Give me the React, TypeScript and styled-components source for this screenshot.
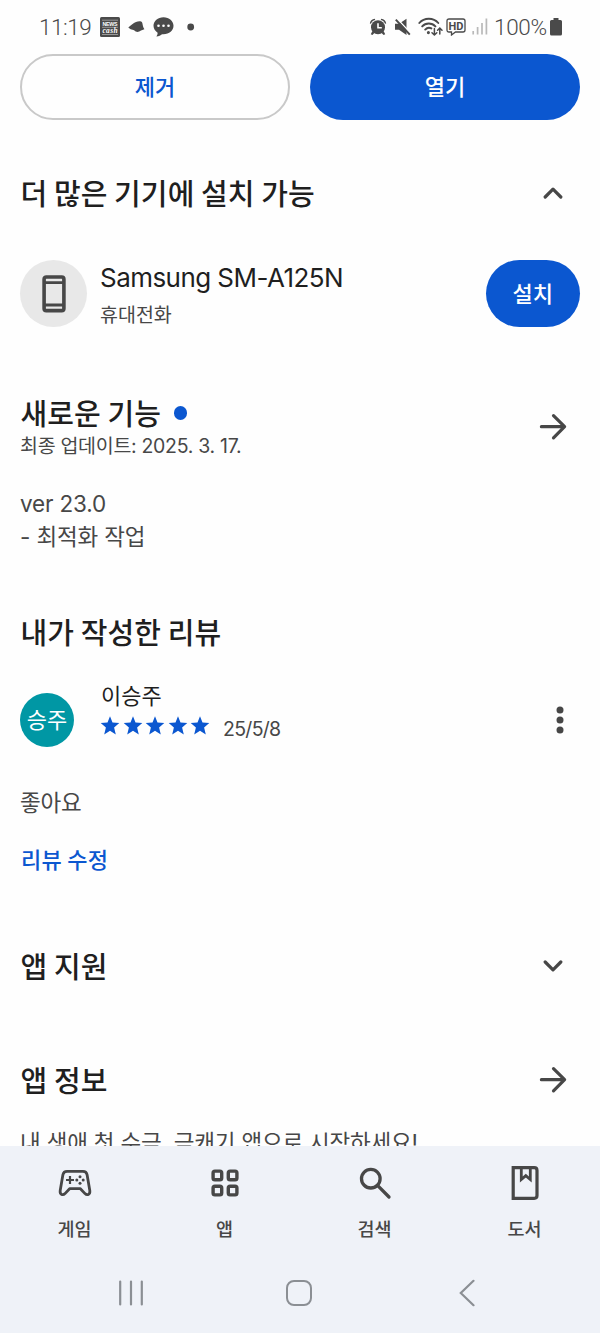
import React from "react";
import styled, { createGlobalStyle } from "styled-components";

const KR = `"Noto Sans CJK KR", sans-serif`;
const MIX = `Inter, "Noto Sans CJK KR", sans-serif`;
const INK = "#1f1f1f";
const SUB = "#474747";
const BLUE = "#0b57d0";

const GlobalStyle = createGlobalStyle`
  * { box-sizing: border-box; }
  body { margin: 0; background: #fefefe; }
`;

const Screen = styled.div`
  display: flex;
  flex-direction: column;
  width: 600px;
  height: 1333px;
  overflow: hidden;
  background: #fefefe;
  color: ${INK};
  font-family: ${KR};
  svg { display: block; flex: none; }
`;

const StatusBar = styled.header`
  display: flex;
  justify-content: space-between;
  align-items: center;
  height: 53px;
  flex: none;
  padding: 0 38px 0 39px;
  color: #4a4a4a;
`;

const StatusGroup = styled.div<{ $gap: number }>`
  display: flex;
  align-items: center;
  gap: ${(p) => p.$gap}px;
`;

const StatusText = styled.span<{ $spacing: number; $width: number }>`
  width: ${(p) => p.$width}px;
  font: 300 22.5px/26px Roboto, sans-serif;
  letter-spacing: ${(p) => p.$spacing}px;
  white-space: nowrap;
`;

const Content = styled.main`
  flex: 1;
  min-height: 0;
  overflow: hidden;
  padding: 0 20px;
`;

const ButtonRow = styled.div`
  display: grid;
  grid-template-columns: 1fr 1fr;
  gap: 20px;
  padding-top: 0.5px;
`;

const PillButton = styled.button<{ $outlined?: boolean; $width?: string }>`
  width: ${(p) => p.$width ?? "100%"};
  height: 66.5px;
  padding: 0 0 4px;
  flex: none;
  border-radius: 34px;
  border: ${(p) => (p.$outlined ? "2px solid #c9c9c9" : "none")};
  background: ${(p) => (p.$outlined ? "transparent" : BLUE)};
  color: ${(p) => (p.$outlined ? BLUE : "#fff")};
  font: 500 22px/32px ${KR};
`;

const Row = styled.div<{ $top: number; $height: number }>`
  display: flex;
  align-items: center;
  justify-content: space-between;
  margin-top: ${(p) => p.$top}px;
  height: ${(p) => p.$height}px;
`;

const Heading = styled.h2`
  display: flex;
  align-items: center;
  margin: 0;
  height: 40px;
  padding: 0 0 1px 0.5px;
  font: 500 29px/37px ${KR};
  letter-spacing: 0.1px;
  white-space: nowrap;
`;

const NewDot = styled.i`
  width: 13.5px;
  height: 13.5px;
  margin: 1px 0 0 12.5px;
  border-radius: 50%;
  background: ${BLUE};
`;

const IconSlot = styled.span<{ $right: number }>`
  display: flex;
  margin-right: ${(p) => p.$right}px;
`;

const DeviceBadge = styled.div`
  display: flex;
  align-items: center;
  justify-content: center;
  width: 67px;
  height: 67px;
  border-radius: 50%;
  background: #e8e8e8;
`;

const DeviceText = styled.div`
  flex: 1;
  padding: 2px 0 0 13px;
`;

const DeviceName = styled.div`
  font: 400 26px/36px ${MIX};
  letter-spacing: -0.55px;
`;

const DeviceKind = styled.div`
  padding-top: 2px;
  color: ${SUB};
  font: 400 19.5px/32px ${KR};
`;

const Updated = styled.div`
  color: ${SUB};
  font: 400 19.5px/27px ${MIX};
  letter-spacing: -0.3px;
`;

const Body = styled.p<{ $top: number; $spacing?: number }>`
  margin: ${(p) => p.$top}px 0 0;
  color: ${SUB};
  font: 400 22.5px/33.3px ${MIX};
  letter-spacing: ${(p) => p.$spacing ?? -0.15}px;
  white-space: nowrap;
`;

const Avatar = styled.div`
  display: flex;
  align-items: center;
  justify-content: center;
  width: 54px;
  height: 54px;
  padding-bottom: 3px;
  border-radius: 50%;
  background: #0097a4;
  color: #fff;
  font: 400 22px/32px ${KR};
`;

const Reviewer = styled.div`
  flex: 1;
  height: 80px;
  padding-left: 26px;
`;

const ReviewerName = styled.div`
  height: 31px;
  padding-left: 1px;
  font: 400 22px/29px ${KR};
`;

const Rating = styled.div`
  display: flex;
  align-items: center;
  gap: 2.6px;
  height: 31px;
`;

const ReviewDate = styled.span`
  padding: 6px 0 0 10px;
  color: ${SUB};
  font: 400 19.5px/26px ${MIX};
  letter-spacing: -0.7px;
`;

const EditLink = styled.a`
  display: block;
  margin-top: 22px;
  padding-bottom: 2px;
  padding-left: 1px;
  color: ${BLUE};
  font: 500 22px/34px ${KR};
  letter-spacing: 0.3px;
`;

const BottomArea = styled.footer`
  flex: none;
  height: 187px;
  padding-top: 1px;
  background: #eff2f8;
`;

const Tabs = styled.nav`
  display: grid;
  grid-template-columns: repeat(4, 1fr);
  height: 106px;
  padding-top: 18px;
`;

const Tab = styled.div`
  display: flex;
  flex-direction: column;
  align-items: center;
  gap: 13px;
  color: ${SUB};
  font: 500 18.5px/28px ${KR};
`;

const TabLabel = styled.span`
  padding-right: 1px;
`;

const SystemNav = styled.div`
  display: grid;
  grid-template-columns: repeat(3, 168px);
  justify-items: center;
  align-items: center;
  height: 80px;
  padding-left: 47px;
`;

const Chevron = ({ up }: { up?: boolean }) => (
  <svg width="20" height="12" viewBox="0 0 20 12" fill="none" stroke={SUB} strokeWidth="3.2" strokeLinecap="round" strokeLinejoin="round">
    <path d={up ? "M2.2 10L10 2.2L17.8 10" : "M2.2 2L10 9.8L17.8 2"} />
  </svg>
);

const Arrow = () => (
  <svg width="28" height="28" viewBox="0 0 28 28" fill="none" stroke={SUB} strokeWidth="3.2" strokeLinecap="round" strokeLinejoin="round">
    <path d="M2.4 13.7H25M14.5 2.6L25.6 13.7L14.5 24.8" />
  </svg>
);

const Star = () => (
  <svg width="20" height="20" viewBox="0 0 20 20" fill={BLUE}>
    <path d="M10 .3L12.5 6.6L19.3 7.1L14.1 11.5L15.8 18.4L10 14.7L4.2 18.4L5.9 11.5L.7 7.1L7.5 6.6Z" />
  </svg>
);

const More = () => (
  <svg width="8" height="30" viewBox="0 0 8 30" fill={SUB}>
    <circle cx="4" cy="5" r="3.5" />
    <circle cx="4" cy="15" r="3.5" />
    <circle cx="4" cy="25" r="3.5" />
  </svg>
);

const Phone = () => (
  <svg width="24" height="38" viewBox="0 0 24 38" fill="none" stroke={SUB}>
    <rect x="2.1" y="2" width="19.8" height="33.6" rx="2.2" strokeWidth="3.6" />
    <path d="M2 7.7H22M2 30H22" strokeWidth="2.8" />
  </svg>
);

const NewsIcon = () => (
  <svg width="20" height="20" viewBox="0 0 20 20">
    <rect width="20" height="20" rx="1.5" fill="#4a4a4a" />
    <path d="M2 3.2H18M2 10.3H18M2 17.5H18" stroke="#ccc" strokeWidth=".6" />
    <text x="10" y="9.2" textAnchor="middle" textLength="15" fontFamily="Liberation Sans" fontWeight="700" fontSize="5.3" fill="#fff">NEWS</text>
    <text x="10" y="16" textAnchor="middle" textLength="15" fontFamily="Liberation Serif" fontStyle="italic" fontWeight="700" fontSize="7.4" fill="#fff">cash</text>
  </svg>
);

const Cap = () => (
  <svg width="17" height="12" viewBox="0 0 17 12" fill="#4a4a4a">
    <path d="M.3 6.5C2.5 4.6 5.3 2.3 8 1.1C10.2.2 13-.1 14 1.2C14.8 2.8 14.5 5.2 16.4 8.3L13 9.4C11.6 10 10.4 11.2 8.5 10.8C7.2 10.6 7 9.4 5.5 9L2.6 8.3Z" />
  </svg>
);

const Chat = () => (
  <svg width="21" height="20" viewBox="0 0 21 20">
    <path d="M10.5.3C4.8.3.5 4 .5 8.8C.5 11.7 2.2 14.2 4.6 15.7C4.7 17 4.2 18.3 3.4 19.4C5.9 19.2 7.8 18.3 9 17.2C15.7 17.8 20.5 14 20.5 8.8C20.5 4 16.2.3 10.5.3Z" fill="#4a4a4a" />
    <g fill="#fff"><circle cx="5.5" cy="8.8" r="1.3" /><circle cx="10.5" cy="8.8" r="1.3" /><circle cx="15.5" cy="8.8" r="1.3" /></g>
  </svg>
);

const Alarm = () => (
  <svg width="18" height="18" viewBox="0 0 18 18">
    <g fill="#4a4a4a">
      <path d="M.8 5.6C1 3 3 1 5.8.8L6.2 2C4 2.6 2.6 3.8 2 5.8ZM17.2 5.6C17 3 15 1 12.2.8L11.8 2C14 2.6 15.4 3.8 16 5.8Z" />
      <circle cx="9" cy="9.3" r="7" />
      <path d="M3.4 13L5.4 15L3.4 17L1.8 16.3ZM14.6 13L12.6 15L14.6 17L16.2 16.3Z" />
    </g>
    <path d="M9 5.2V9.8H12.8" fill="none" stroke="#fff" strokeWidth="1.6" />
  </svg>
);

const Mute = () => (
  <svg width="18" height="18" viewBox="0 0 18 18">
    <path d="M1 5.8H5L12.5.8V17L5 11.8H1Z" fill="#4a4a4a" />
    <path d="M3.2.8L17 15.4" stroke="#fefefe" strokeWidth="1.4" />
    <path d="M1.8 1.6L15.8 16.6" stroke="#4a4a4a" strokeWidth="2" />
  </svg>
);

const Wifi = () => (
  <svg width="25" height="19" viewBox="0 0 25 19" fill="none" stroke="#4a4a4a" strokeWidth="1.9" strokeLinecap="round">
    <path d="M1.3 6C6.2.3 15.4.3 20.3 6M4.2 9.4C7.6 5.6 14 5.6 17.4 9.4M7.2 12.6C9 10.6 11.3 10.3 13.4 11.4" />
    <circle cx="10.4" cy="15.6" r=".6" fill="#4a4a4a" />
    <path d="M16.4 11.6V18M14 15.8L16.4 18L18.8 15.8M21.8 17V11.2M19.6 13.2L21.8 11L24 13.2" strokeWidth="1.5" />
  </svg>
);

const HD = () => (
  <svg width="20" height="18" viewBox="0 0 20 18">
    <path d="M3 1H17Q19 1 19 3V12Q19 14 17 14H9.5L5.5 17V14H3Q1 14 1 12V3Q1 1 3 1Z" fill="none" stroke="#4a4a4a" strokeWidth="1.3" />
    <text x="10" y="11.6" textAnchor="middle" fontFamily="Roboto" fontWeight="700" fontSize="11" fill="#4a4a4a">HD</text>
  </svg>
);

const Signal = () => (
  <svg width="16" height="17" viewBox="0 0 16 17" stroke="#b9b9b9" strokeWidth="1.7">
    <path d="M1.2 13V16.5M5.6 9V16.5" />
    <path d="M10 5V16.5M14.4.5V16.5" />
  </svg>
);

const Battery = () => (
  <svg width="12" height="18" viewBox="0 0 12 18" fill="#4a4a4a">
    <path d="M3.5 0H8.5V2H10.5Q12 2 12 3.5V16Q12 17.5 10.5 17.5H1.5Q0 17.5 0 16V3.5Q0 2 1.5 2H3.5Z" />
  </svg>
);

const Gamepad = () => (
  <svg width="36" height="36" viewBox="0 0 36 36" fill="none" stroke={SUB}>
    <path d="M10 6.4H26C28.3 6.4 29.6 7.6 30.1 9.8L32.8 25.4C33.4 29.8 30 30.6 28 28.6L23.4 23.7H12.6L8 28.6C6 30.6 2.6 29.8 3.2 25.4L5.9 9.8C6.4 7.6 7.7 6.4 10 6.4Z" strokeWidth="2.8" strokeLinejoin="round" />
    <path d="M13 11V19M9 15H17" strokeWidth="2.2" />
    <g fill={SUB} stroke="none"><circle cx="23" cy="11.8" r="1.5" /><circle cx="23" cy="18.2" r="1.5" /><circle cx="19.8" cy="15" r="1.5" /><circle cx="26.2" cy="15" r="1.5" /></g>
  </svg>
);

const AppsGrid = () => (
  <svg width="36" height="36" viewBox="0 0 36 36" fill="none" stroke={SUB} strokeWidth="3.4">
    <rect x="6.1" y="6.1" width="8.6" height="8.6" rx="1.8" />
    <rect x="21.3" y="6.1" width="8.6" height="8.6" rx="1.8" />
    <rect x="6.1" y="21.3" width="8.6" height="8.6" rx="1.8" />
    <rect x="21.3" y="21.3" width="8.6" height="8.6" rx="1.8" />
  </svg>
);

const Search = () => (
  <svg width="36" height="36" viewBox="0 0 36 36" fill="none" stroke={SUB} strokeWidth="3.3" strokeLinecap="round">
    <circle cx="13.8" cy="13.7" r="9.3" />
    <path d="M20.5 20.4L32 32" />
  </svg>
);

const Book = () => (
  <svg width="36" height="36" viewBox="0 0 36 36" fill="none" stroke={SUB}>
    <path d="M6.2 2.7H27.2Q30 2.7 30 5.5V30.5Q30 33.3 27.2 33.3H6.2Z" strokeWidth="3.2" />
    <path d="M14.3 2.7V14.5L18.8 10.7L23.3 14.5V2.7" strokeWidth="2.8" />
  </svg>
);

const tabs = [
  { label: "게임", icon: <Gamepad /> },
  { label: "앱", icon: <AppsGrid /> },
  { label: "검색", icon: <Search /> },
  { label: "도서", icon: <Book /> },
];

export default function App() {
  return (
    <Screen>
      <GlobalStyle />
      <StatusBar>
        <StatusGroup $gap={8}>
          <StatusText $width={53} $spacing={-0.5}>11:19</StatusText>
          <NewsIcon />
          <Cap />
          <Chat />
          <svg width="22" height="8" viewBox="0 0 22 8"><circle cx="8.7" cy="4" r="3.4" fill="#4a4a4a" /></svg>
        </StatusGroup>
        <StatusGroup $gap={6}>
          <StatusGroup $gap={7}>
            <Alarm />
            <Mute />
          </StatusGroup>
          <StatusGroup $gap={3}>
            <Wifi />
            <HD />
          </StatusGroup>
          <Signal />
          <StatusGroup $gap={4}>
            <StatusText $width={52} $spacing={-0.3}>100%</StatusText>
            <Battery />
          </StatusGroup>
        </StatusGroup>
      </StatusBar>

      <Content>
        <ButtonRow>
          <PillButton $outlined>제거</PillButton>
          <PillButton>열기</PillButton>
        </ButtonRow>

        <Row $top={53} $height={40}>
          <Heading>더 많은 기기에 설치 가능</Heading>
          <IconSlot $right={17}><Chevron up /></IconSlot>
        </Row>

        <Row $top={47} $height={67}>
          <DeviceBadge><Phone /></DeviceBadge>
          <DeviceText>
            <DeviceName>Samsung SM-A125N</DeviceName>
            <DeviceKind>휴대전화</DeviceKind>
          </DeviceText>
          <PillButton $width="94.5px">설치</PillButton>
        </Row>

        <Row $top={66} $height={67}>
          <div>
            <Heading>새로운 기능<NewDot /></Heading>
            <Updated>최종 업데이트: 2025. 3. 17.</Updated>
          </div>
          <IconSlot $right={13}><Arrow /></IconSlot>
        </Row>
        <Body $top={26.5}>ver 23.0<br />- 최적화 작업</Body>

        <Row $top={59} $height={40}>
          <Heading>내가 작성한 리뷰</Heading>
        </Row>
        <Row $top={27.5} $height={80}>
          <Avatar>승주</Avatar>
          <Reviewer>
            <ReviewerName>이승주</ReviewerName>
            <Rating>
              <Star /><Star /><Star /><Star /><Star />
              <ReviewDate>25/5/8</ReviewDate>
            </Rating>
          </Reviewer>
          <IconSlot $right={16}><More /></IconSlot>
        </Row>
        <Body $top={26}>좋아요</Body>
        <EditLink>리뷰 수정</EditLink>

        <Row $top={69} $height={40}>
          <Heading>앱 지원</Heading>
          <IconSlot $right={17}><Chevron /></IconSlot>
        </Row>

        <Row $top={74} $height={40}>
          <Heading>앱 정보</Heading>
          <IconSlot $right={13}><Arrow /></IconSlot>
        </Row>
        <Body $top={26} $spacing={-0.2}>내 생애 첫 수금, 금캐기 앱으로 시작하세요!</Body>
      </Content>

      <BottomArea>
        <Tabs>
          {tabs.map((t) => (
            <Tab key={t.label}>{t.icon}<TabLabel>{t.label}</TabLabel></Tab>
          ))}
        </Tabs>
        <SystemNav>
          <svg width="26" height="26" viewBox="0 0 26 26" stroke="#8b8f94" strokeWidth="2.2" strokeLinecap="round"><path d="M2.2 1.5V24.5M13 1.5V24.5M23.8 1.5V24.5" /></svg>
          <svg width="28" height="28" viewBox="0 0 28 28" fill="none" stroke="#8b8f94" strokeWidth="2"><rect x="2" y="2" width="24" height="24" rx="7" /></svg>
          <svg width="16" height="28" viewBox="0 0 16 28" fill="none" stroke="#8b8f94" strokeWidth="2.2" strokeLinecap="round"><path d="M14.5 1.8L1.8 14L14.5 26.2" /></svg>
        </SystemNav>
      </BottomArea>
    </Screen>
  );
}
